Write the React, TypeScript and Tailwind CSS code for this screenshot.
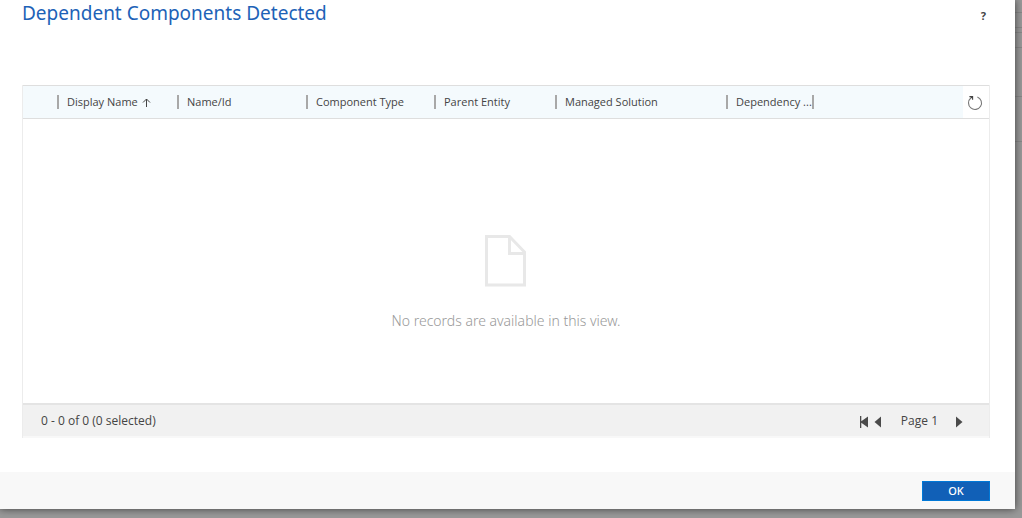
import React, { useState } from 'react'

interface Column {
  label: string
  width: string
}

const columns: Column[] = [
  { label: 'Display Name', width: 'w-[120px]' },
  { label: 'Name/Id', width: 'w-[129px]' },
  { label: 'Component Type', width: 'w-[128px]' },
  { label: 'Parent Entity', width: 'w-[121px]' },
  { label: 'Managed Solution', width: 'w-[171px]' },
  { label: 'Dependency ...', width: 'w-[88px]' }
]

const SortArrow = ({ ascending }: { ascending: boolean }) => (
  <svg viewBox="0 0 9 9" className={`w-[9px] h-[9px] shrink-0 ${ascending ? '' : 'rotate-180'}`} fill="none" stroke="#444" strokeWidth="1">
    <path d="M4.5 9V1M1 4.5L4.5 1L8 4.5" />
  </svg>
)

const RefreshIcon = () => (
  <svg viewBox="0 0 16 16" className="w-4 h-4" fill="none" stroke="#777" strokeWidth="1.1">
    <path d="M10.4 1.9A6.5 6.5 0 1 1 3.8 3" />
    <path d="M2.4 1.6H5.6V4.8M5.4 1.8L3.8 3.2" stroke="#444" strokeWidth="1.1" />
  </svg>
)

const PageIcon = () => (
  <svg viewBox="0 0 42 52" className="w-[42px] h-[52px]" fill="none" stroke="#e8e8e8" strokeWidth="3">
    <path d="M1.5 1.5H24.5L39.5 17V50H1.5Z" />
    <path d="M24.5 1.5V18.5H40" />
  </svg>
)

const EmptyState = () => (
  <div className="flex flex-col items-center pt-[116px] h-[284px]">
    <PageIcon />
    <p className="mt-6 text-sm leading-5 font-light text-[#999]">No records are available in this view.</p>
  </div>
)

const Pager = () => {
  const [page, setPage] = useState(1)

  return (
    <nav aria-label="Pages" className="flex items-center pr-[26px]">
      <button aria-label="First page" onClick={() => setPage(1)} className="mr-[6px] mt-[2px]">
        <svg viewBox="0 0 8 12" className="w-2 h-3" fill="#4a4a4a">
          <path d="M0 0H1.3V5.3L8 0.5V11.5L1.3 6.7V12H0Z" />
        </svg>
      </button>
      <button aria-label="Previous page" onClick={() => setPage(Math.max(1, page - 1))} className="mr-5 mt-[2px]">
        <svg viewBox="0 0 7 12" className="w-[7px] h-3" fill="#4a4a4a">
          <path d="M7 0.5V11.5L0.5 6Z" />
        </svg>
      </button>
      <span>Page {page}</span>
      <button aria-label="Next page" onClick={() => setPage(page + 1)} className="ml-[18px] mt-[2px]">
        <svg viewBox="0 0 7 12" className="w-[7px] h-3" fill="#4a4a4a">
          <path d="M0 0.5V11.5L6.5 6Z" />
        </svg>
      </button>
    </nav>
  )
}

const ComponentsGrid = () => {
  const [ascending, setAscending] = useState(true)

  return (
    <section className="border-x border-[#ececec]">
      <table className="w-full table-fixed border-collapse">
        <thead>
          <tr className="h-[33px] bg-[#f4fafd] border-y border-[#dedede]">
            <td className="w-[34px]" />
            {columns.map((column, index) => (
              <th key={column.label} scope="col" className={`${column.width} p-0 text-left font-['Open_Sans','Noto_Sans',sans-serif] text-[11px] leading-4 font-medium text-[#444]`}>
                <div className={`flex items-center h-[14px] pl-2 border-l-2 border-[#a8a8a8] whitespace-nowrap ${index === columns.length - 1 ? 'border-r-2' : ''}`}>
                  {index === 0 ? (
                    <button onClick={() => setAscending(!ascending)} className="flex items-center gap-1">
                      {column.label}
                      <SortArrow ascending={ascending} />
                    </button>
                  ) : (
                    column.label
                  )}
                </div>
              </th>
            ))}
            <td />
            <td className="w-[26px] p-0 bg-white">
              <button aria-label="Refresh" className="flex items-center justify-center w-full pt-[2px] pr-[2px]">
                <RefreshIcon />
              </button>
            </td>
          </tr>
        </thead>
        <tbody>
          <tr>
            <td colSpan={columns.length + 3} className="p-0">
              <EmptyState />
            </td>
          </tr>
        </tbody>
      </table>
      <div className="flex items-center justify-between h-[35px] border-t-2 border-b-2 border-t-[#e4e4e4] border-b-[#f8f8f8] bg-[#f1f1f1] font-['Open_Sans','Noto_Sans',sans-serif] text-xs font-medium text-[#444]">
        <span className="pl-[18px]">0 - 0 of 0 (0 selected)</span>
        <Pager />
      </div>
    </section>
  )
}

const App: React.FC = () => {
  return (
    <div className="flex min-h-screen bg-[#999] font-['Noto_Sans','Open_Sans',sans-serif]">
      {/* Dialog */}
      <main className="relative flex-1 self-start bg-white shadow-[0_0_8px_rgba(0,0,0,0.6)]">
        <header className="flex items-start justify-between h-[85px] pl-[22px] pr-[29px]">
          <h1 className="text-[19px] leading-[26px] text-[#1d62b7]">Dependent Components Detected</h1>
          <button aria-label="Help" className="mt-2 text-[11px] leading-4 font-bold text-[#444]">?</button>
        </header>

        <div className="pl-[22px] pr-[25px] pb-[34px]">
          <ComponentsGrid />
        </div>

        <footer className="flex items-center justify-end h-[37px] pr-[25px] bg-[#f8f8f8]">
          <button className="w-[68px] h-5 border border-[#0078d7] bg-[#1160b7] text-[11px] leading-4 font-medium text-white">OK</button>
        </footer>
      </main>

      {/* Page behind the dialog */}
      <div className="w-[7px] pt-3">
        <div className="h-4 border-y border-[#888]" />
        <div className="mt-1 h-4 border-y border-[#888]" />
        <div className="h-[49px] border-b border-[#888]" />
        <div className="h-[45px] border-b border-[#888]" />
      </div>
    </div>
  )
}

export default App
